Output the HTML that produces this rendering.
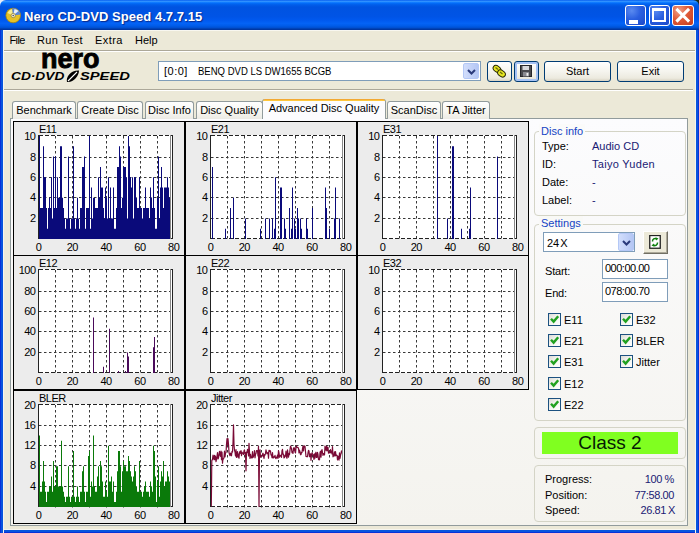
<!DOCTYPE html>
<html><head><meta charset="utf-8"><title>Nero CD-DVD Speed 4.7.7.15</title>
<style>
html,body{margin:0;padding:0;background:#ece9d8;}
body{width:699px;height:533px;overflow:hidden;position:relative;font-family:"Liberation Sans",sans-serif;font-size:11px;color:#000;}
.abs,#w *{position:absolute;box-sizing:border-box;}
#w{position:absolute;left:0;top:0;width:699px;height:533px;background:#ece9d8;overflow:hidden;}
#corner{left:0;top:0;width:699px;height:10px;background:linear-gradient(to right,#e8ecf8 0,#e8ecf8 50%,#1a2a18 50%);}
#title{left:0;top:0;width:699px;height:30px;border-radius:6px 6px 0 0;
background:linear-gradient(to bottom,#0058ee 0%,#3593ff 4%,#288eff 6%,#127dff 8%,#036ffc 10%,#0262ee 14%,#0057e5 20%,#0053e1 24%,#0054e6 56%,#0058ee 66%,#0463f6 78%,#005ce9 86%,#0050d4 92%,#0040b0 96%,#00309a 100%);}
#ttext{left:24px;top:9px;height:16px;line-height:16px;font-size:13px;font-weight:bold;color:#fff;white-space:nowrap;text-shadow:1px 1px 1px #0a2a8a;letter-spacing:0.05px;}
.bl{background:#0a4fdc;}
#bL{left:0;top:30px;width:4px;height:503px;background:linear-gradient(to right,#0831d9 0,#0831d9 1px,#0855dd 1px,#0855dd 3px,#f6f5ee 3px);}
#bR{left:695px;top:30px;width:4px;height:503px;background:linear-gradient(to right,#f6f5ee 0,#f6f5ee 1px,#0855dd 1px,#0855dd 3px,#0831d9 3px);}
#bB{left:0;top:529px;width:699px;height:4px;background:linear-gradient(to bottom,#f6f5ee 0,#f6f5ee 1px,#0855dd 1px,#0855dd 3px,#0831d9 3px);}
.tb{top:5px;width:21px;height:21px;border:1px solid #fff;border-radius:3px;background:radial-gradient(circle at 30% 25%,#5a8af0 0%,#2a5fe0 45%,#1a48c8 100%);}
#tbx{background:radial-gradient(circle at 30% 25%,#f0a088 0%,#e05a38 45%,#c43a1c 100%);}
.menu{top:33px;height:14px;line-height:14px;white-space:nowrap;}
.hl{height:1px;}
.lg2{top:71px;height:12px;line-height:12px;font-size:10px;font-style:italic;font-weight:bold;color:#000;white-space:nowrap;transform-origin:0 50%;}
.t11{height:14px;line-height:14px;white-space:nowrap;}
.tab{top:101px;height:18px;border:1px solid #919b9c;border-bottom:none;border-radius:3px 3px 0 0;background:linear-gradient(to bottom,#ffffff 0,#f6f5ef 60%,#ecebe5 100%);text-align:center;line-height:16px;white-space:nowrap;}
.btn{border:1px solid #003c74;border-radius:3px;background:linear-gradient(to bottom,#ffffff 0,#f5f4ee 50%,#eceadf 85%,#d8d2c2 100%);text-align:center;white-space:nowrap;}
.grp{border:1px solid #d4d4c6;border-radius:4px;}
.gcap{color:#1544c4;height:14px;line-height:14px;padding:0 2px;white-space:nowrap;}
.val{color:#1a1a74;}
.vr{letter-spacing:-0.4px;}
.inp{border:1px solid #7f9db9;background:#fff;height:20px;line-height:17px;padding-left:3px;white-space:nowrap;}
.tm{letter-spacing:-0.5px;padding-left:2px;}
.cb{width:13px;height:13px;border:1px solid #1c5180;background:linear-gradient(135deg,#dcdcd6 0,#f4f4f0 50%,#ffffff 100%);}
.ct{font-family:"Liberation Sans",sans-serif;font-size:11px;fill:#000;letter-spacing:-0.5px;}
</style></head><body>
<div id="w">
<div id="corner"></div>
<div id="title"></div>
<svg style="left:5px;top:7px" width="17" height="17" viewBox="0 0 17 17"><circle cx="8.2" cy="8.5" r="7.3" fill="#e6c228" stroke="#a8860c" stroke-width="0.8"/><path d="M2.5 6A6.5 6.5 0 0 1 7 2.2L8.2 8.5z" fill="#f8ec90"/><path d="M8.2 8.5L7 1.4A7.3 7.3 0 0 1 15.4 7.5z" fill="#5a86d8"/><path d="M8.2 8.5L9.5 2A6.5 6.5 0 0 1 13.5 4z" fill="#e8f0fc"/><circle cx="8.2" cy="8.5" r="2.2" fill="#f4ecc0" stroke="#8a7a30" stroke-width=".7"/><circle cx="8.2" cy="8.5" r="0.8" fill="#4a4a6a"/></svg>
<div id="ttext">Nero CD-DVD Speed 4.7.7.15</div>
<div class="tb" style="left:625px"><div style="left:3px;top:14px;width:9px;height:4px;background:#fff"></div></div>
<div class="tb" style="left:649px"><div style="left:2px;top:2px;width:14px;height:14px;border:2px solid #fff;border-top-width:3px"></div></div>
<div class="tb" id="tbx" style="left:672px;width:22px"><svg style="left:0;top:0" width="20" height="19"><path d="M4.5 4L15 14.5M15 4L4.5 14.5" stroke="#fff" stroke-width="3.1" stroke-linecap="square"/></svg></div>
<div class="hl" style="left:3px;top:30px;width:693px;background:#f8f7f0"></div><div id="bB"></div><div id="bL"></div><div id="bR"></div>

<!-- menu -->
<div class="menu" style="left:9.5px;letter-spacing:-0.6px">File</div>
<div class="menu" style="left:37px;letter-spacing:0.35px">Run Test</div>
<div class="menu" style="left:95px;letter-spacing:0.45px">Extra</div>
<div class="menu" style="left:135px">Help</div>
<div class="hl" style="left:4px;top:50px;width:691px;background:#aca899"></div>
<div class="hl" style="left:4px;top:51px;width:691px;background:#fff"></div>

<!-- logo -->
<div id="logo1" style="left:41px;top:45px;height:28px;line-height:28px;font-size:27px;font-weight:bold;letter-spacing:0px;color:#000;white-space:nowrap;-webkit-text-stroke:0.9px #000;">nero</div>
<div id="logo2" class="lg2" style="left:11px;transform:scaleX(1.37)">CD·DVD</div>
<div id="logo3" class="lg2" style="left:79.5px;transform:scaleX(1.47)">SPEED</div>
<svg style="left:65px;top:69px" width="15" height="15" viewBox="0 0 15 15"><path d="M2 13C0.5 8 6 1 14 1.5C14 7 8 14 2 13z" fill="#000"/><path d="M3 12L12 3" stroke="#fff" stroke-width="1.1"/></svg>

<!-- toolbar -->
<div class="inp" style="left:158px;top:61px;width:323px;height:20px;line-height:17px;padding-left:5px;"><span id="c1" style="left:5px;top:1px;letter-spacing:0.5px">[0:0]</span><span id="c2" style="left:39px;top:1px;letter-spacing:0;transform-origin:0 50%;transform:scaleX(0.866)">BENQ DVD LS DW1655 BCGB</span>
<div class="cbtn" style="right:1px;top:1px;width:16px;height:16px;border-radius:2px;border:1px solid #b4c8f6;background:linear-gradient(to right,#d2defc 0,#b4c6f4 100%)"><svg style="left:2.5px;top:4.5px" width="9" height="6"><path d="M1 1L4.5 4.5L8 1" stroke="#2a3a7a" stroke-width="2" fill="none"/></svg></div></div>
<div class="btn" style="left:487px;top:61px;width:25px;height:21px"><svg style="left:3px;top:2px" width="17" height="16" viewBox="0 0 17 16"><g stroke="#2a2a08" stroke-width="1" fill="#e6e620"><ellipse cx="6" cy="5" rx="4.2" ry="3" transform="rotate(35 6 5)"/><ellipse cx="10.5" cy="9.5" rx="4.2" ry="3" transform="rotate(35 10.5 9.5)"/></g><path d="M4.5 3.5l2.5 2M9 8l2.5 2" stroke="#6a6a10" stroke-width="1.2"/></svg></div>
<div class="btn" style="left:514px;top:61px;width:25px;height:21px;box-shadow:inset 0 0 0 2px #a6c2f4"><svg style="left:5px;top:3px" width="12" height="12" viewBox="0 0 12 12"><rect x="0.5" y="0.5" width="11" height="11" fill="#4a4a4e" stroke="#26262a"/><rect x="2.5" y="1" width="6.5" height="4" fill="#d8d8dc"/><rect x="3" y="7" width="6" height="4.5" fill="#8a8a90"/><rect x="6.5" y="8" width="1.8" height="2.8" fill="#f0f0f0"/></svg></div>
<div class="btn" style="left:544px;top:61px;width:67px;height:21px;line-height:19px">Start</div>
<div class="btn" style="left:617px;top:61px;width:67px;height:21px;line-height:19px">Exit</div>
<div class="hl" style="left:4px;top:89px;width:689px;background:#aca899"></div>
<div class="hl" style="left:4px;top:90px;width:689px;background:#fff"></div>

<!-- tab pane -->
<div id="pane" style="left:10px;top:118px;width:678px;height:408px;border:1px solid #919b9c;background:linear-gradient(to bottom,#fcfcfe 0,#f4f3ee 100%);"></div>
<div class="tab" style="left:12px;width:64px">Benchmark</div>
<div class="tab" style="left:77px;width:66px">Create Disc</div>
<div class="tab" style="left:145px;width:49px">Disc Info</div>
<div class="tab" style="left:196px;width:67px">Disc Quality</div>
<div class="tab" style="left:387px;width:54px">ScanDisc</div>
<div class="tab" style="left:442px;width:48px">TA Jitter</div>
<div class="tab" id="atab" style="left:262px;top:99px;width:124px;height:20px;background:linear-gradient(to bottom,#e68b2c 0,#ffc73c 1px,#ffc73c 2px,#fcfcfe 2px);border-top:none;line-height:19px;border-radius:3px 3px 0 0">Advanced Disc Quality</div>

<!-- charts -->
<svg style="left:0;top:0" width="699" height="533" viewBox="0 0 699 533">
<rect x="13" y="121" width="516" height="269" fill="#ececec"/>
<rect x="13" y="390" width="344" height="134" fill="#ececec"/>
<path d="M13 121.5H529M13 255.5H529M13 389.5H529M13 390.5H357M13 523.5H357M13.5 121V524M184.5 121V524M185.5 121V524M356.5 121V524M357.5 121V390M528.5 121V390" stroke="#000" stroke-width="1" fill="none"/>
<rect x="38" y="135" width="135" height="104" fill="#fff"/>
<path d="M55.5 136V240M72.5 136V240M89.5 136V240M106.5 136V240M123.5 136V240M140.5 136V240M157.5 136V240M39 218.5H170M39 197.5H170M39 177.5H170M39 157.5H170" stroke="#383838" stroke-width="1" stroke-dasharray="2.5 2.5" fill="none"/>
<path d="M39 135.5H173M39 238.5H173" stroke="#222" stroke-width="1" stroke-dasharray="4 2" fill="none"/>
<path d="M39 239v-103.0h1v103.0zM40 239v-30.9h3v30.9zM43 239v-92.7h1v92.7zM44 239v-61.8h2v61.8zM46 239v-30.9h1v30.9zM47 239v-10.3h1v10.3zM48 239v-30.9h1v30.9zM49 239v-41.2h1v41.2zM50 239v-30.9h1v30.9zM51 239v-61.8h1v61.8zM52 239v-20.6h1v20.6zM53 239v-82.4h1v82.4zM54 239v-30.9h1v30.9zM55 239v-82.4h1v82.4zM56 239v-30.9h1v30.9zM57 239v-61.8h1v61.8zM58 239v-41.2h2v41.2zM60 239v-92.7h2v92.7zM62 239v-41.2h1v41.2zM63 239v-30.9h1v30.9zM64 239v-20.6h1v20.6zM65 239v-10.3h1v10.3zM66 239v-20.6h2v20.6zM68 239v-82.4h1v82.4zM69 239v-20.6h1v20.6zM70 239v-10.3h1v10.3zM71 239v-20.6h2v20.6zM73 239v-92.7h1v92.7zM74 239v-20.6h1v20.6zM75 239v-10.3h1v10.3zM76 239v-20.6h1v20.6zM77 239v-41.2h1v41.2zM78 239v-20.6h1v20.6zM79 239v-10.3h1v10.3zM80 239v-30.9h2v30.9zM82 239v-72.1h2v72.1zM84 239v-82.4h1v82.4zM85 239v-10.3h1v10.3zM86 239v-30.9h3v30.9zM89 239v-103.0h1v103.0zM90 239v-10.3h1v10.3zM91 239v-51.5h1v51.5zM92 239v-20.6h1v20.6zM93 239v-41.2h2v41.2zM95 239v-30.9h3v30.9zM98 239v-61.8h1v61.8zM99 239v-41.2h1v41.2zM100 239v-72.1h1v72.1zM101 239v-51.5h2v51.5zM103 239v-30.9h1v30.9zM104 239v-20.6h1v20.6zM105 239v-51.5h1v51.5zM106 239v-41.2h1v41.2zM107 239v-20.6h1v20.6zM108 239v-61.8h1v61.8zM109 239v-20.6h1v20.6zM110 239v-51.5h1v51.5zM111 239v-20.6h2v20.6zM113 239v-51.5h1v51.5zM114 239v-10.3h2v10.3zM116 239v-30.9h1v30.9zM117 239v-72.1h2v72.1zM119 239v-92.7h1v92.7zM120 239v-82.4h1v82.4zM121 239v-30.9h1v30.9zM122 239v-41.2h1v41.2zM123 239v-72.1h3v72.1zM126 239v-61.8h1v61.8zM127 239v-20.6h1v20.6zM128 239v-103.0h1v103.0zM129 239v-92.7h1v92.7zM130 239v-61.8h1v61.8zM131 239v-51.5h1v51.5zM132 239v-61.8h1v61.8zM133 239v-20.6h1v20.6zM134 239v-61.8h2v61.8zM136 239v-41.2h1v41.2zM137 239v-30.9h2v30.9zM139 239v-61.8h1v61.8zM140 239v-30.9h2v30.9zM142 239v-20.6h1v20.6zM143 239v-30.9h2v30.9zM145 239v-51.5h1v51.5zM146 239v-30.9h3v30.9zM149 239v-20.6h1v20.6zM150 239v-51.5h1v51.5zM151 239v-41.2h1v41.2zM152 239v-30.9h1v30.9zM153 239v-61.8h1v61.8zM154 239v-30.9h1v30.9zM155 239v-10.3h2v10.3zM157 239v-41.2h1v41.2zM158 239v-82.4h1v82.4zM159 239v-20.6h1v20.6zM160 239v-51.5h1v51.5zM161 239v-72.1h1v72.1zM162 239v-51.5h1v51.5zM163 239v-30.9h1v30.9zM164 239v-51.5h3v51.5zM167 239v-61.8h1v61.8zM168 239v-51.5h1v51.5zM169 239v-41.2h2v41.2z" fill="#0a0a7a"/>
<path d="M38.5 135V239" stroke="#222" stroke-width="1"/>
<path d="M170.5 135V239" stroke="#888" stroke-width="1"/>
<path d="M172.5 135V239" stroke="#222" stroke-width="1"/>
<text x="39" y="133" class="ct">E11</text>
<text x="35.5" y="222" text-anchor="end" class="ct">2</text>
<text x="35.5" y="201" text-anchor="end" class="ct">4</text>
<text x="35.5" y="181" text-anchor="end" class="ct">6</text>
<text x="35.5" y="161" text-anchor="end" class="ct">8</text>
<text x="35.5" y="140" text-anchor="end" class="ct">10</text>
<text x="38.5" y="251" text-anchor="middle" class="ct">0</text>
<text x="72.3" y="251" text-anchor="middle" class="ct">20</text>
<text x="106.1" y="251" text-anchor="middle" class="ct">40</text>
<text x="139.9" y="251" text-anchor="middle" class="ct">60</text>
<text x="173.7" y="251" text-anchor="middle" class="ct">80</text>
<rect x="210" y="135" width="135" height="104" fill="#fff"/>
<path d="M227.5 136V240M244.5 136V240M261.5 136V240M278.5 136V240M295.5 136V240M312.5 136V240M329.5 136V240M211 218.5H342M211 197.5H342M211 177.5H342M211 157.5H342" stroke="#383838" stroke-width="1" stroke-dasharray="2.5 2.5" fill="none"/>
<path d="M211 135.5H345M211 238.5H345" stroke="#222" stroke-width="1" stroke-dasharray="4 2" fill="none"/>
<path d="M212 239v-72.1h1v72.1zM225 239v-10.3h1v10.3zM230 239v-30.9h1v30.9zM233 239v-41.2h1v41.2zM245 239v-20.6h1v20.6zM260 239v-10.3h1v10.3zM265 239v-20.6h1v20.6zM269 239v-20.6h1v20.6zM272 239v-20.6h1v20.6zM274 239v-10.3h1v10.3zM275 239v-61.8h1v61.8zM280 239v-51.5h2v51.5zM284 239v-20.6h1v20.6zM285 239v-10.3h1v10.3zM289 239v-30.9h1v30.9zM291 239v-10.3h1v10.3zM292 239v-51.5h1v51.5zM294 239v-20.6h1v20.6zM295 239v-10.3h1v10.3zM297 239v-30.9h1v30.9zM298 239v-20.6h1v20.6zM300 239v-20.6h1v20.6zM301 239v-10.3h1v10.3zM306 239v-20.6h1v20.6zM307 239v-10.3h1v10.3zM312 239v-30.9h1v30.9zM325 239v-51.5h1v51.5zM326 239v-30.9h1v30.9zM329 239v-10.3h1v10.3zM334 239v-20.6h1v20.6zM335 239v-51.5h1v51.5zM339 239v-20.6h1v20.6z" fill="#0a0a7a"/>
<path d="M210.5 135V239" stroke="#222" stroke-width="1"/>
<path d="M342.5 135V239" stroke="#888" stroke-width="1"/>
<path d="M344.5 135V239" stroke="#222" stroke-width="1"/>
<text x="211" y="133" class="ct">E21</text>
<text x="207.5" y="222" text-anchor="end" class="ct">2</text>
<text x="207.5" y="201" text-anchor="end" class="ct">4</text>
<text x="207.5" y="181" text-anchor="end" class="ct">6</text>
<text x="207.5" y="161" text-anchor="end" class="ct">8</text>
<text x="207.5" y="140" text-anchor="end" class="ct">10</text>
<text x="210.5" y="251" text-anchor="middle" class="ct">0</text>
<text x="244.3" y="251" text-anchor="middle" class="ct">20</text>
<text x="278.1" y="251" text-anchor="middle" class="ct">40</text>
<text x="311.9" y="251" text-anchor="middle" class="ct">60</text>
<text x="345.7" y="251" text-anchor="middle" class="ct">80</text>
<rect x="382" y="135" width="135" height="104" fill="#fff"/>
<path d="M399.5 136V240M416.5 136V240M433.5 136V240M450.5 136V240M467.5 136V240M484.5 136V240M501.5 136V240M383 218.5H514M383 197.5H514M383 177.5H514M383 157.5H514" stroke="#383838" stroke-width="1" stroke-dasharray="2.5 2.5" fill="none"/>
<path d="M383 135.5H517M383 238.5H517" stroke="#222" stroke-width="1" stroke-dasharray="4 2" fill="none"/>
<path d="M437 239v-103.0h1v103.0zM447 239v-20.6h1v20.6zM452 239v-92.7h2v92.7zM461 239v-10.3h1v10.3zM469 239v-10.3h1v10.3zM470 239v-51.5h1v51.5zM497 239v-82.4h1v82.4z" fill="#0a0a7a"/>
<path d="M382.5 135V239" stroke="#222" stroke-width="1"/>
<path d="M514.5 135V239" stroke="#888" stroke-width="1"/>
<path d="M516.5 135V239" stroke="#222" stroke-width="1"/>
<text x="383" y="133" class="ct">E31</text>
<text x="379.5" y="222" text-anchor="end" class="ct">2</text>
<text x="379.5" y="201" text-anchor="end" class="ct">4</text>
<text x="379.5" y="181" text-anchor="end" class="ct">6</text>
<text x="379.5" y="161" text-anchor="end" class="ct">8</text>
<text x="379.5" y="140" text-anchor="end" class="ct">10</text>
<text x="382.5" y="251" text-anchor="middle" class="ct">0</text>
<text x="416.3" y="251" text-anchor="middle" class="ct">20</text>
<text x="450.1" y="251" text-anchor="middle" class="ct">40</text>
<text x="483.9" y="251" text-anchor="middle" class="ct">60</text>
<text x="517.7" y="251" text-anchor="middle" class="ct">80</text>
<rect x="38" y="269" width="135" height="104" fill="#fff"/>
<path d="M55.5 270V374M72.5 270V374M89.5 270V374M106.5 270V374M123.5 270V374M140.5 270V374M157.5 270V374M39 352.5H170M39 331.5H170M39 311.5H170M39 291.5H170" stroke="#383838" stroke-width="1" stroke-dasharray="2.5 2.5" fill="none"/>
<path d="M39 269.5H173M39 372.5H173" stroke="#222" stroke-width="1" stroke-dasharray="4 2" fill="none"/>
<path d="M93 373v-55.6h1v55.6zM103 373v-6.2h1v6.2zM109 373v-44.3h1v44.3zM118 373v-2.1h1v2.1zM125 373v-2.1h1v2.1zM127 373v-20.6h1v20.6zM128 373v-16.5h1v16.5zM153 373v-25.8h1v25.8zM154 373v-36.1h1v36.1z" fill="#4a0a5a"/>
<path d="M38.5 269V373" stroke="#222" stroke-width="1"/>
<path d="M170.5 269V373" stroke="#888" stroke-width="1"/>
<path d="M172.5 269V373" stroke="#222" stroke-width="1"/>
<text x="39" y="267" class="ct">E12</text>
<text x="35.5" y="356" text-anchor="end" class="ct">20</text>
<text x="35.5" y="335" text-anchor="end" class="ct">40</text>
<text x="35.5" y="315" text-anchor="end" class="ct">60</text>
<text x="35.5" y="295" text-anchor="end" class="ct">80</text>
<text x="35.5" y="274" text-anchor="end" class="ct">100</text>
<text x="38.5" y="385" text-anchor="middle" class="ct">0</text>
<text x="72.3" y="385" text-anchor="middle" class="ct">20</text>
<text x="106.1" y="385" text-anchor="middle" class="ct">40</text>
<text x="139.9" y="385" text-anchor="middle" class="ct">60</text>
<text x="173.7" y="385" text-anchor="middle" class="ct">80</text>
<rect x="210" y="269" width="135" height="104" fill="#fff"/>
<path d="M227.5 270V374M244.5 270V374M261.5 270V374M278.5 270V374M295.5 270V374M312.5 270V374M329.5 270V374M211 352.5H342M211 331.5H342M211 311.5H342M211 291.5H342" stroke="#383838" stroke-width="1" stroke-dasharray="2.5 2.5" fill="none"/>
<path d="M211 269.5H345M211 372.5H345" stroke="#222" stroke-width="1" stroke-dasharray="4 2" fill="none"/>
<path d="" fill="#0a0a7a"/>
<path d="M210.5 269V373" stroke="#222" stroke-width="1"/>
<path d="M342.5 269V373" stroke="#888" stroke-width="1"/>
<path d="M344.5 269V373" stroke="#222" stroke-width="1"/>
<text x="211" y="267" class="ct">E22</text>
<text x="207.5" y="356" text-anchor="end" class="ct">2</text>
<text x="207.5" y="335" text-anchor="end" class="ct">4</text>
<text x="207.5" y="315" text-anchor="end" class="ct">6</text>
<text x="207.5" y="295" text-anchor="end" class="ct">8</text>
<text x="207.5" y="274" text-anchor="end" class="ct">10</text>
<text x="210.5" y="385" text-anchor="middle" class="ct">0</text>
<text x="244.3" y="385" text-anchor="middle" class="ct">20</text>
<text x="278.1" y="385" text-anchor="middle" class="ct">40</text>
<text x="311.9" y="385" text-anchor="middle" class="ct">60</text>
<text x="345.7" y="385" text-anchor="middle" class="ct">80</text>
<rect x="382" y="269" width="135" height="104" fill="#fff"/>
<path d="M399.5 270V374M416.5 270V374M433.5 270V374M450.5 270V374M467.5 270V374M484.5 270V374M501.5 270V374M383 352.5H514M383 331.5H514M383 311.5H514M383 291.5H514" stroke="#383838" stroke-width="1" stroke-dasharray="2.5 2.5" fill="none"/>
<path d="M383 269.5H517M383 372.5H517" stroke="#222" stroke-width="1" stroke-dasharray="4 2" fill="none"/>
<path d="" fill="#0a0a7a"/>
<path d="M382.5 269V373" stroke="#222" stroke-width="1"/>
<path d="M514.5 269V373" stroke="#888" stroke-width="1"/>
<path d="M516.5 269V373" stroke="#222" stroke-width="1"/>
<text x="383" y="267" class="ct">E32</text>
<text x="379.5" y="356" text-anchor="end" class="ct">2</text>
<text x="379.5" y="335" text-anchor="end" class="ct">4</text>
<text x="379.5" y="315" text-anchor="end" class="ct">6</text>
<text x="379.5" y="295" text-anchor="end" class="ct">8</text>
<text x="379.5" y="274" text-anchor="end" class="ct">10</text>
<text x="382.5" y="385" text-anchor="middle" class="ct">0</text>
<text x="416.3" y="385" text-anchor="middle" class="ct">20</text>
<text x="450.1" y="385" text-anchor="middle" class="ct">40</text>
<text x="483.9" y="385" text-anchor="middle" class="ct">60</text>
<text x="517.7" y="385" text-anchor="middle" class="ct">80</text>
<rect x="38" y="404" width="135" height="103" fill="#fff"/>
<path d="M55.5 405V508M72.5 405V508M89.5 405V508M106.5 405V508M123.5 405V508M140.5 405V508M157.5 405V508M39 486.5H170M39 465.5H170M39 445.5H170M39 425.5H170" stroke="#383838" stroke-width="1" stroke-dasharray="2.5 2.5" fill="none"/>
<path d="M39 404.5H173M39 506.5H173" stroke="#222" stroke-width="1" stroke-dasharray="4 2" fill="none"/>
<path d="M39 507v-71.4h1v71.4zM40 507v-15.3h2v15.3zM42 507v-25.5h1v25.5zM43 507v-45.9h1v45.9zM44 507v-25.5h1v25.5zM45 507v-15.3h1v15.3zM46 507v-5.1h1v5.1zM47 507v-15.3h2v15.3zM49 507v-20.4h2v20.4zM51 507v-30.6h1v30.6zM52 507v-15.3h1v15.3zM53 507v-45.9h1v45.9zM54 507v-20.4h2v20.4zM56 507v-40.8h2v40.8zM58 507v-20.4h3v20.4zM61 507v-66.3h1v66.3zM62 507v-20.4h1v20.4zM63 507v-15.3h1v15.3zM64 507v-10.2h1v10.2zM65 507v-5.1h1v5.1zM66 507v-10.2h2v10.2zM68 507v-40.8h1v40.8zM69 507v-10.2h1v10.2zM70 507v-5.1h1v5.1zM71 507v-10.2h2v10.2zM73 507v-56.1h1v56.1zM74 507v-10.2h1v10.2zM75 507v-5.1h1v5.1zM76 507v-10.2h1v10.2zM77 507v-20.4h1v20.4zM78 507v-10.2h1v10.2zM79 507v-5.1h1v5.1zM80 507v-15.3h2v15.3zM82 507v-35.7h1v35.7zM83 507v-40.8h1v40.8zM84 507v-15.3h1v15.3zM85 507v-5.1h1v5.1zM86 507v-15.3h2v15.3zM88 507v-51.0h1v51.0zM89 507v-56.1h1v56.1zM90 507v-10.2h1v10.2zM91 507v-25.5h1v25.5zM92 507v-20.4h1v20.4zM93 507v-71.4h1v71.4zM94 507v-20.4h1v20.4zM95 507v-15.3h2v15.3zM97 507v-30.6h1v30.6zM98 507v-40.8h1v40.8zM99 507v-20.4h1v20.4zM100 507v-45.9h1v45.9zM101 507v-40.8h1v40.8zM102 507v-25.5h1v25.5zM103 507v-10.2h2v10.2zM105 507v-25.5h1v25.5zM106 507v-15.3h1v15.3zM107 507v-10.2h1v10.2zM108 507v-61.2h1v61.2zM109 507v-25.5h2v25.5zM111 507v-30.6h1v30.6zM112 507v-15.3h1v15.3zM113 507v-25.5h1v25.5zM114 507v-5.1h2v5.1zM116 507v-15.3h1v15.3zM117 507v-35.7h1v35.7zM118 507v-56.1h2v56.1zM120 507v-40.8h1v40.8zM121 507v-15.3h1v15.3zM122 507v-35.7h1v35.7zM123 507v-45.9h1v45.9zM124 507v-40.8h2v40.8zM126 507v-35.7h2v35.7zM128 507v-51.0h1v51.0zM129 507v-45.9h1v45.9zM130 507v-35.7h1v35.7zM131 507v-30.6h1v30.6zM132 507v-25.5h1v25.5zM133 507v-30.6h1v30.6zM134 507v-40.8h1v40.8zM135 507v-35.7h1v35.7zM136 507v-20.4h1v20.4zM137 507v-15.3h2v15.3zM139 507v-45.9h1v45.9zM140 507v-15.3h2v15.3zM142 507v-10.2h1v10.2zM143 507v-15.3h1v15.3zM144 507v-20.4h1v20.4zM145 507v-25.5h1v25.5zM146 507v-15.3h3v15.3zM149 507v-10.2h1v10.2zM150 507v-25.5h1v25.5zM151 507v-20.4h1v20.4zM152 507v-15.3h1v15.3zM153 507v-61.2h1v61.2zM154 507v-56.1h1v56.1zM155 507v-30.6h1v30.6zM156 507v-5.1h1v5.1zM157 507v-25.5h1v25.5zM158 507v-40.8h1v40.8zM159 507v-10.2h1v10.2zM160 507v-25.5h1v25.5zM161 507v-35.7h1v35.7zM162 507v-30.6h1v30.6zM163 507v-45.9h1v45.9zM164 507v-20.4h1v20.4zM165 507v-25.5h2v25.5zM167 507v-35.7h1v35.7zM168 507v-30.6h1v30.6zM169 507v-25.5h1v25.5zM170 507v-20.4h1v20.4z" fill="#0a7a0a"/>
<path d="M38.5 404V507" stroke="#222" stroke-width="1"/>
<path d="M170.5 404V507" stroke="#888" stroke-width="1"/>
<path d="M172.5 404V507" stroke="#222" stroke-width="1"/>
<text x="39" y="402" class="ct">BLER</text>
<text x="35.5" y="490" text-anchor="end" class="ct">4</text>
<text x="35.5" y="469" text-anchor="end" class="ct">8</text>
<text x="35.5" y="449" text-anchor="end" class="ct">12</text>
<text x="35.5" y="429" text-anchor="end" class="ct">16</text>
<text x="35.5" y="409" text-anchor="end" class="ct">20</text>
<text x="38.5" y="519" text-anchor="middle" class="ct">0</text>
<text x="72.3" y="519" text-anchor="middle" class="ct">20</text>
<text x="106.1" y="519" text-anchor="middle" class="ct">40</text>
<text x="139.9" y="519" text-anchor="middle" class="ct">60</text>
<text x="173.7" y="519" text-anchor="middle" class="ct">80</text>
<rect x="210" y="404" width="135" height="103" fill="#fff"/>
<path d="M227.5 405V508M244.5 405V508M261.5 405V508M278.5 405V508M295.5 405V508M312.5 405V508M329.5 405V508M211 486.5H342M211 465.5H342M211 445.5H342M211 425.5H342" stroke="#383838" stroke-width="1" stroke-dasharray="2.5 2.5" fill="none"/>
<path d="M211 404.5H345M211 506.5H345" stroke="#222" stroke-width="1" stroke-dasharray="4 2" fill="none"/>
<polyline points="211.0,506.5 211.3,505.5 211.8,460.6 212.5,459.4 213.0,455.2 213.5,456.7 214.0,459.6 214.5,455.4 215.0,459.7 215.5,456.1 216.0,461.6 216.5,459.3 217.0,456.2 217.5,452.5 218.0,459.0 218.5,458.0 219.0,454.3 219.5,451.4 220.0,454.8 220.5,456.4 221.0,451.1 221.5,459.7 222.0,452.2 222.5,463.1 223.0,458.8 223.5,459.0 224.0,457.3 224.5,451.1 225.0,456.9 225.5,453.2 226.0,452.7 226.5,444.3 227.0,438.7 227.5,444.3 228.0,438.7 228.5,444.3 229.0,452.3 229.5,454.6 230.0,455.7 230.5,453.2 231.0,454.4 231.5,455.8 232.0,451.3 232.5,452.1 233.0,442.8 233.5,424.9 234.0,444.3 234.5,450.5 235.0,451.9 235.5,455.9 236.0,449.6 236.5,457.5 237.0,454.7 237.5,451.6 238.0,457.2 238.5,454.1 239.0,458.2 239.5,452.4 240.0,451.5 240.5,453.3 241.0,450.5 241.5,455.7 242.0,452.2 242.5,453.1 243.0,453.2 243.5,454.4 244.0,450.8 244.5,449.9 245.0,454.2 245.5,452.5 246.0,470.8 246.5,452.1 247.0,452.6 247.5,449.4 248.0,451.0 248.5,455.9 249.0,443.3 249.5,452.4 250.0,458.4 250.5,454.3 251.0,457.0 251.5,457.5 252.0,458.0 252.5,451.5 253.0,457.4 253.5,456.3 254.0,455.0 254.5,450.6 255.0,457.8 255.5,454.4 256.0,453.5 256.5,450.5 257.0,451.0 257.5,450.6 258.0,456.0 258.5,446.3 259.0,506.5 259.5,450.4 260.0,449.8 260.5,457.2 261.0,456.9 261.5,456.4 262.0,456.4 262.5,454.1 263.0,453.2 263.5,456.1 264.0,458.5 264.5,454.7 265.0,455.2 265.5,453.4 266.0,449.8 266.5,452.2 267.0,453.8 267.5,452.9 268.0,452.4 268.5,458.1 269.0,450.3 269.5,451.4 270.0,450.5 270.5,451.2 271.0,455.0 271.5,454.9 272.0,457.6 272.5,452.7 273.0,458.0 273.5,457.9 274.0,456.6 274.5,457.1 275.0,455.4 275.5,458.1 276.0,458.6 276.5,457.2 277.0,457.6 277.5,455.2 278.0,458.3 278.5,450.5 279.0,452.9 279.5,457.2 280.0,456.2 280.5,455.4 281.0,455.2 281.5,457.4 282.0,450.8 282.5,449.4 283.0,454.3 283.5,454.1 284.0,457.8 284.5,457.6 285.0,455.4 285.5,456.1 286.0,451.0 286.5,457.1 287.0,458.3 287.5,449.8 288.0,453.7 288.5,457.2 289.0,453.6 289.5,454.7 290.0,450.1 290.5,446.0 291.0,447.1 291.5,448.6 292.0,452.6 292.5,451.6 293.0,453.5 293.5,447.9 294.0,450.1 294.5,447.8 295.0,452.0 295.5,452.9 296.0,447.5 296.5,445.9 297.0,447.2 297.5,447.6 298.0,447.5 298.5,448.2 299.0,452.9 299.5,450.2 300.0,451.7 300.5,454.7 301.0,454.7 301.5,452.4 302.0,452.6 302.5,448.6 303.0,446.2 303.5,450.9 304.0,446.4 304.5,445.9 305.0,446.2 305.5,451.6 306.0,456.5 306.5,456.5 307.0,456.8 307.5,456.7 308.0,452.8 308.5,450.3 309.0,450.8 309.5,456.7 310.0,455.1 310.5,453.8 311.0,460.3 311.5,455.0 312.0,452.8 312.5,453.9 313.0,454.2 313.5,456.7 314.0,459.5 314.5,453.9 315.0,458.1 315.5,453.8 316.0,452.2 316.5,457.5 317.0,457.4 317.5,452.4 318.0,454.5 318.5,459.5 319.0,459.9 319.5,459.7 320.0,452.8 320.5,451.2 321.0,457.2 321.5,451.0 322.0,449.6 322.5,452.5 323.0,455.3 323.5,453.5 324.0,453.8 324.5,454.9 325.0,446.1 325.5,449.0 326.0,450.2 326.5,446.4 327.0,451.0 327.5,447.0 328.0,447.4 328.5,453.1 329.0,452.7 329.5,452.3 330.0,452.8 330.5,449.6 331.0,452.6 331.5,451.1 332.0,453.8 332.5,446.6 333.0,456.8 333.5,455.9 334.0,454.7 334.5,451.8 335.0,456.2 335.5,451.7 336.0,455.5 336.5,455.2 337.0,455.3 337.5,459.9 338.0,456.0 338.5,458.4 339.0,460.1 339.5,452.8 340.0,458.5 340.5,455.7 341.0,453.4 341.5,450.9 342.0,453.0 342.5,451.3" fill="none" stroke="#7a0a36" stroke-width="1.2" stroke-linejoin="round"/>
<path d="M210.5 404V507" stroke="#222" stroke-width="1"/>
<path d="M342.5 404V507" stroke="#888" stroke-width="1"/>
<path d="M344.5 404V507" stroke="#222" stroke-width="1"/>
<text x="211" y="402" class="ct">Jitter</text>
<text x="207.5" y="490" text-anchor="end" class="ct">4</text>
<text x="207.5" y="469" text-anchor="end" class="ct">8</text>
<text x="207.5" y="449" text-anchor="end" class="ct">12</text>
<text x="207.5" y="429" text-anchor="end" class="ct">16</text>
<text x="207.5" y="409" text-anchor="end" class="ct">20</text>
<text x="210.5" y="519" text-anchor="middle" class="ct">0</text>
<text x="244.3" y="519" text-anchor="middle" class="ct">20</text>
<text x="278.1" y="519" text-anchor="middle" class="ct">40</text>
<text x="311.9" y="519" text-anchor="middle" class="ct">60</text>
<text x="345.7" y="519" text-anchor="middle" class="ct">80</text>
</svg>

<!-- right column -->
<div class="grp" style="left:534px;top:131px;width:152px;height:85px"></div>
<div class="gcap" style="left:539px;top:124px;background:#fbfbfa">Disc info</div>
<div class="t11" style="left:542px;top:139px">Type:</div><div class="t11 val" style="left:592px;top:139px">Audio CD</div>
<div class="t11" style="left:542px;top:157px">ID:</div><div class="t11 val" style="left:592px;top:157px;letter-spacing:0.3px">Taiyo Yuden</div>
<div class="t11" style="left:542px;top:175px">Date:</div><div class="t11 val" style="left:592px;top:175px">-</div>
<div class="t11" style="left:542px;top:193px">Label:</div><div class="t11 val" style="left:592px;top:193px">-</div>

<div class="grp" style="left:534px;top:224px;width:152px;height:197px"></div>
<div class="gcap" style="left:539px;top:216px;background:#f9f9f6">Settings</div>
<div class="inp" style="left:543px;top:232px;width:92px;height:20px;line-height:19px;padding-top:1px">24<span style="position:static;margin-left:1px">X</span>
<div class="cbtn" style="right:0px;top:0px;width:16px;height:18px;border-radius:2px;border:1px solid #b4c8f6;background:linear-gradient(to right,#d2defc 0,#b4c6f4 100%)"><svg style="left:2.5px;top:5.5px" width="9" height="6"><path d="M1 1L4.5 4.5L8 1" stroke="#2a3a7a" stroke-width="2" fill="none"/></svg></div></div>
<div style="left:643px;top:231px;width:25px;height:23px;background:#ece9d8;border:1px solid;border-color:#fff #716f64 #716f64 #fff;box-shadow:inset -1px -1px 0 #aca899"><svg style="left:5px;top:3px" width="12" height="14" viewBox="0 0 12 14"><rect x="0.75" y="0.5" width="10.5" height="12.75" fill="#fff" stroke="#222" stroke-width="1.3"/><path d="M3.5 6.5A2.6 2.6 0 0 1 7.5 4M8.5 7.5A2.6 2.6 0 0 1 4.5 10" stroke="#0f7f0f" stroke-width="1.5" fill="none"/><path d="M6.5 2.2l3 1.3-2.2 2zM5.5 11.8l-3-1.3 2.2-2z" fill="#0f7f0f"/></svg></div>
<div class="t11" style="left:545px;top:264px;letter-spacing:-0.2px">Start:</div>
<div class="inp tm" style="left:602px;top:259px;width:66px">000:00.00</div>
<div class="t11" style="left:545px;top:286px;letter-spacing:-0.2px">End:</div>
<div class="inp tm" style="left:602px;top:282px;width:66px">078:00.70</div>
<div class="cb" style="left:548px;top:313px"><svg style="left:0px;top:0px" width="11" height="11" viewBox="0 0 11 11"><path d="M2 4.8L4.6 7.6L9.2 2.2" stroke="#21a121" stroke-width="2.4" fill="none"/></svg></div><div class="t11" style="left:564px;top:313px">E11</div>
<div class="cb" style="left:548px;top:334px"><svg style="left:0px;top:0px" width="11" height="11" viewBox="0 0 11 11"><path d="M2 4.8L4.6 7.6L9.2 2.2" stroke="#21a121" stroke-width="2.4" fill="none"/></svg></div><div class="t11" style="left:564px;top:334px">E21</div>
<div class="cb" style="left:548px;top:355px"><svg style="left:0px;top:0px" width="11" height="11" viewBox="0 0 11 11"><path d="M2 4.8L4.6 7.6L9.2 2.2" stroke="#21a121" stroke-width="2.4" fill="none"/></svg></div><div class="t11" style="left:564px;top:355px">E31</div>
<div class="cb" style="left:548px;top:377px"><svg style="left:0px;top:0px" width="11" height="11" viewBox="0 0 11 11"><path d="M2 4.8L4.6 7.6L9.2 2.2" stroke="#21a121" stroke-width="2.4" fill="none"/></svg></div><div class="t11" style="left:564px;top:377px">E12</div>
<div class="cb" style="left:548px;top:398px"><svg style="left:0px;top:0px" width="11" height="11" viewBox="0 0 11 11"><path d="M2 4.8L4.6 7.6L9.2 2.2" stroke="#21a121" stroke-width="2.4" fill="none"/></svg></div><div class="t11" style="left:564px;top:398px">E22</div>
<div class="cb" style="left:620px;top:313px"><svg style="left:0px;top:0px" width="11" height="11" viewBox="0 0 11 11"><path d="M2 4.8L4.6 7.6L9.2 2.2" stroke="#21a121" stroke-width="2.4" fill="none"/></svg></div><div class="t11" style="left:636px;top:313px">E32</div>
<div class="cb" style="left:620px;top:334px"><svg style="left:0px;top:0px" width="11" height="11" viewBox="0 0 11 11"><path d="M2 4.8L4.6 7.6L9.2 2.2" stroke="#21a121" stroke-width="2.4" fill="none"/></svg></div><div class="t11" style="left:636px;top:334px">BLER</div>
<div class="cb" style="left:620px;top:355px"><svg style="left:0px;top:0px" width="11" height="11" viewBox="0 0 11 11"><path d="M2 4.8L4.6 7.6L9.2 2.2" stroke="#21a121" stroke-width="2.4" fill="none"/></svg></div><div class="t11" style="left:636px;top:355px">Jitter</div>

<div class="grp" style="left:534px;top:427px;width:152px;height:32px"></div>
<div style="left:542px;top:432px;width:136px;height:22px;background:#80ff20;text-align:center;font-size:19px;line-height:22px;color:#061a04;white-space:nowrap">Class 2</div>

<div class="grp" style="left:534px;top:465px;width:152px;height:57px"></div>
<div class="t11" style="left:545px;top:472px">Progress:</div><div class="t11 val vr" style="right:25px;top:472px">100 %</div>
<div class="t11" style="left:545px;top:488px">Position:</div><div class="t11 val vr" style="right:25px;top:488px">77:58.00</div>
<div class="t11" style="left:545px;top:503px">Speed:</div><div class="t11 val vr" style="right:24px;top:503px">26.81<span style="position:static;margin-left:2px">X</span></div>
</div>
</body></html>
